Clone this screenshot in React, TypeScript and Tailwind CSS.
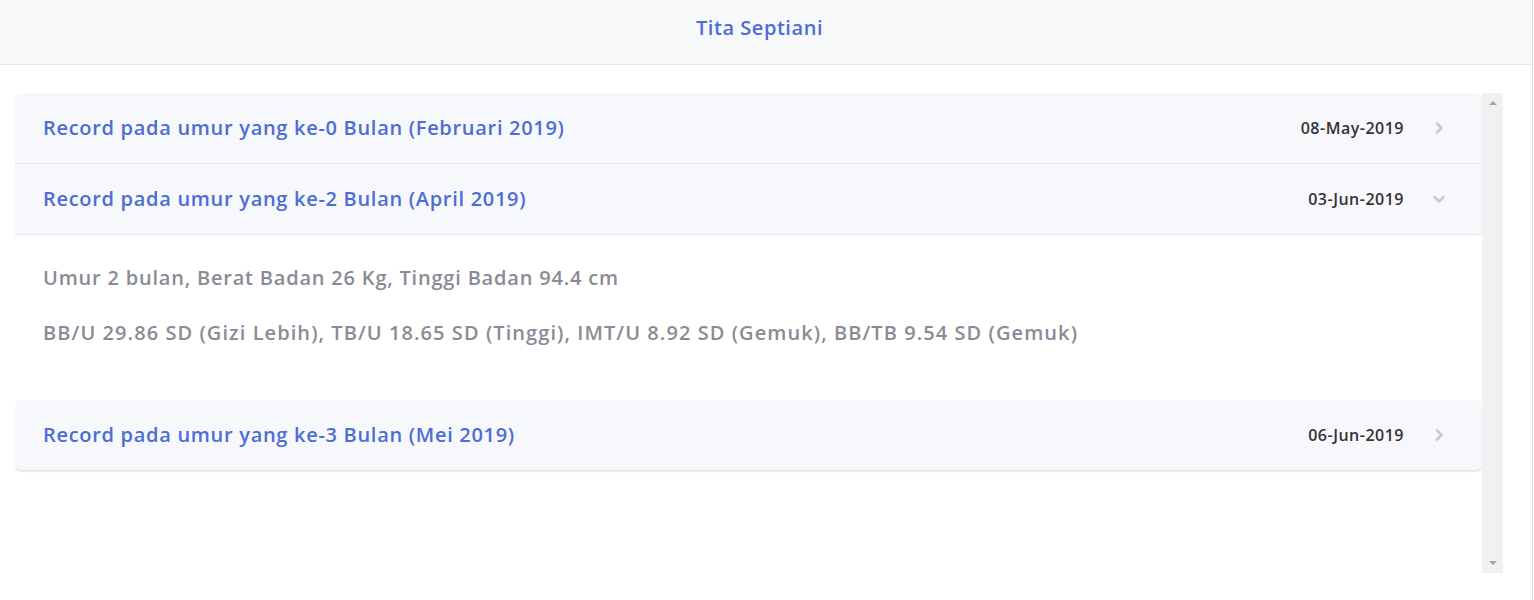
import React from "react";

const font = { fontFamily: "'Open Sans', 'Noto Sans', sans-serif" };

function Chevron({ down }: { down?: boolean }) {
  return (
    <svg width="14" height="14" viewBox="0 0 14 14" className="shrink-0">
      {down ? (
        <path d="M2.5 5 L7 9.5 L11.5 5" fill="none" stroke="#c8c9d2" strokeWidth="2.6" strokeLinecap="round" strokeLinejoin="round" />
      ) : (
        <path d="M5 2.5 L9.5 7 L5 11.5" fill="none" stroke="#c8c9d2" strokeWidth="2.6" strokeLinecap="round" strokeLinejoin="round" />
      )}
    </svg>
  );
}

function Row({ title, date, open, cls }: { title: string; date: string; open?: boolean; cls?: string }) {
  return (
    <div className={"h-[71px] flex items-center bg-[#f7f8fb] border-b border-[#e6e7ea] pl-[28px] pr-[36px] " + (cls || "")}>
      <div className="flex-1 text-[20px] font-semibold tracking-[0.7px] text-[#4d6dd5]">{title}</div>
      <div className="text-[16px] font-semibold tracking-[0.5px] text-[#333333] mr-[28px] -mt-[1px]">{date}</div>
      <Chevron down={open} />
    </div>
  );
}

export default function App() {
  return (
    <div className="w-[1534px] h-[600px] bg-white overflow-hidden" style={font}>
      <div className="w-[1533px] h-[600px] border-r border-[#dedede] flex flex-col">
        <div className="h-[65px] shrink-0 bg-[#f7f8fa] border-b border-[#e4e6e9] flex justify-center pt-[14px] pr-[13px]">
          <span className="text-[20px] leading-[28px] font-semibold tracking-[0.55px] text-[#4d6dd5]">Tita Septiani</span>
        </div>
        <div className="mt-[28px] ml-[15px] mr-[29px] h-[480px] flex">
          <div className="flex-1 flex flex-col">
            <Row title="Record pada umur yang ke-0 Bulan (Februari 2019)" date="08-May-2019" cls="rounded-t-[6px]" />
            <Row title="Record pada umur yang ke-2 Bulan (April 2019)" date="03-Jun-2019" open />
            <div className="pl-[28px] pt-[29px] h-[165px] text-[20px] font-semibold text-[#8a8b94]">
              <p className="leading-[28px] tracking-[0.8px]">Umur 2 bulan, Berat Badan 26 Kg, Tinggi Badan 94.4 cm</p>
              <p className="leading-[28px] mt-[27px] tracking-[1.07px]">BB/U 29.86 SD (Gizi Lebih), TB/U 18.65 SD (Tinggi), IMT/U 8.92 SD (Gemuk), BB/TB 9.54 SD (Gemuk)</p>
            </div>
            <Row title="Record pada umur yang ke-3 Bulan (Mei 2019)" date="06-Jun-2019" cls="rounded-[6px] shadow-[0_1px_1px_rgba(0,0,0,0.08)]" />
          </div>
          <div className="w-[21px] bg-[#f1f1f1] flex flex-col items-center justify-between py-[8px]">
            <div className="w-0 h-0 border-l-[4px] border-r-[4px] border-b-[4px] border-l-transparent border-r-transparent border-b-[#a3a3a3]" />
            <div className="w-0 h-0 border-l-[4px] border-r-[4px] border-t-[4px] border-l-transparent border-r-transparent border-t-[#a3a3a3]" />
          </div>
        </div>
      </div>
    </div>
  );
}
